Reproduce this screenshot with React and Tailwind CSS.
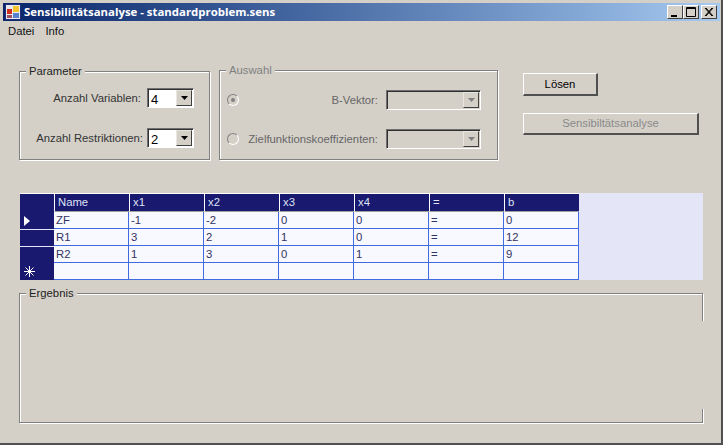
const FONT = "font-['Liberation_Sans',Arial,sans-serif]";

const COLUMNS = ["Name", "x1", "x2", "x3", "x4", "=", "b"];
const ROWS = [
  { marker: "arrow", cells: ["ZF", "-1", "-2", "0", "0", "=", "0"] },
  { marker: "", cells: ["R1", "3", "2", "1", "0", "=", "12"] },
  { marker: "", cells: ["R2", "1", "3", "0", "1", "=", "9"] },
  { marker: "star", cells: ["", "", "", "", "", "", ""] },
];

function AppIcon() {
  return (
    <svg width="16" height="16" viewBox="0 0 16 16">
      <rect x="0.5" y="0.5" width="15" height="15" fill="#e8e8f0" stroke="#1c2f7a" />
      <rect x="8" y="2" width="6" height="6" fill="#f4c430" />
      <rect x="2" y="5" width="5" height="5" fill="#d03020" />
      <rect x="8" y="9" width="6" height="5" fill="#5a80d0" />
      <rect x="2" y="11" width="5" height="3" fill="#a05060" />
    </svg>
  );
}

function CaptionButton({ children }) {
  return (
    <div className="w-[16px] h-[14px] bg-[#d4d0c8] border-t border-l border-white border-r border-b border-r-[#404040] border-b-[#404040] flex items-center justify-center">
      <svg width="12" height="10" viewBox="0 0 12 10">{children}</svg>
    </div>
  );
}

function Arrow({ disabled }) {
  return (
    <svg width="7" height="4" viewBox="0 0 7 4">
      <path d="M0 0h7L3.5 4z" fill={disabled ? "#808080" : "#000"} />
    </svg>
  );
}

function Combo({ value, width, disabled }) {
  return (
    <div className={`flex h-[20px] p-[1px] border-t border-l border-[#707070] border-r border-b border-r-white border-b-white shadow-[inset_1px_1px_0_#303030] ${width} ${disabled ? "bg-[#d4d0c8]" : "bg-white"}`}>
      <div className="flex-1 pl-[2px] text-[13px] leading-[19px] text-black">{value}</div>
      <div className="w-[16px] bg-[#d4d0c8] border-t border-l border-[#e8e6e0] border-r border-b border-r-[#404040] border-b-[#404040] flex items-center justify-center">
        <Arrow disabled={disabled} />
      </div>
    </div>
  );
}

function Radio({ checked }) {
  return (
    <div className="w-[12px] h-[12px] rounded-full border border-[#808080] border-r-white border-b-white bg-[#d4d0c8] flex items-center justify-center shrink-0">
      {checked && <div className="w-[4px] h-[4px] rounded-full bg-[#808080]" />}
    </div>
  );
}

function Group({ title, disabled, className, children }) {
  return (
    <div className={`relative border border-[#808080] shadow-[inset_1px_1px_0_#fff,1px_1px_0_#fff] ${className}`}>
      <div className={`absolute -top-[8px] left-[6px] bg-[#d4d0c8] px-[3px] text-[11.3px] leading-[14px] ${disabled ? "text-[#808080]" : "text-[#222]"}`}>
        {title}
      </div>
      {children}
    </div>
  );
}

function DataGrid() {
  return (
    <div className="ml-[20px] mt-[33px] w-[683px] h-[87px] bg-[#e4e6f8] text-[11.3px] text-[#33335f]">
      <div className="flex w-[559px] h-[19px]">
        <div className="w-[34px] bg-[#191970] border-t border-white" />
        {COLUMNS.map((col) => (
          <div key={col} className="w-[75px] bg-[#191970] text-[#dfe3f5] border-t border-l border-white border-b border-b-[#a0a0a0] pl-[3px] leading-[16px]">
            {col}
          </div>
        ))}
      </div>
      {ROWS.map((row, i) => (
        <div key={i} className="flex w-[559px] h-[17px]">
          <div className={`w-[34px] bg-[#191970] flex items-center pl-[4px] text-white ${i > 0 && i < 3 ? "border-t border-[#e4e6f8]" : ""}`}>
            {row.marker === "arrow" && (
              <svg width="6" height="10" viewBox="0 0 6 10"><path d="M0 0l6 5-6 5z" fill="#fff" /></svg>
            )}
            {row.marker === "star" && (
              <svg width="11" height="11" viewBox="0 0 11 11" stroke="#fff" strokeWidth="1">
                <path d="M5.5 0v11M0 5.5h11M1.5 1.5l8 8M9.5 1.5l-8 8" />
              </svg>
            )}
          </div>
          {row.cells.map((cell, j) => (
            <div key={j} className="w-[75px] bg-[#f8f8ff] border-r border-b border-[#4169e1] pl-[2px] leading-[17px]">
              {cell}
            </div>
          ))}
        </div>
      ))}
    </div>
  );
}

export default function App() {
  return (
    <div className={`w-[723px] h-[445px] bg-[#d4d0c8] overflow-hidden border-r-2 border-b-2 border-[#505050] pt-[3px] pl-[3px] ${FONT}`}>
      {/* title bar */}
      <div className="h-[18px] w-[717px] flex items-center pl-[2px] pr-[3px] bg-gradient-to-r from-[#0a246a] to-[#a6caf0]">
        <AppIcon />
        <div className="ml-[3px] flex-1 font-['Open_Sans',sans-serif] font-bold text-[11.4px] text-white leading-[18px]">
          Sensibilitätsanalyse - standardproblem.sens
        </div>
        <div className="flex">
          <CaptionButton><path d="M2 8h6v2H2z" fill="#000" /></CaptionButton>
          <CaptionButton><path d="M1.5 0.5h9v9h-9zM1.5 1.5h9" fill="none" stroke="#000" /></CaptionButton>
          <div className="w-[2px]" />
          <CaptionButton><path d="M2 1l7 8M3 1l7 8M9 1L2 9M10 1L3 9" stroke="#000" fill="none" /></CaptionButton>
        </div>
      </div>

      {/* menu */}
      <div className="flex gap-[11px] pl-[5px] h-[20px] items-center text-[11.3px] text-[#111]">
        <span>Datei</span>
        <span>Info</span>
      </div>

      {/* top controls */}
      <div className="flex items-start pl-[16px] pt-[30px] text-[11.3px] text-[#333]">
        <Group title="Parameter" className="w-[191px] h-[89px] pt-[16px] pr-[15px] flex flex-col items-end gap-[20px]">
          <div className="flex items-center gap-[6px]">
            <span>Anzahl Variablen:</span>
            <Combo value="4" width="w-[47px]" />
          </div>
          <div className="flex items-center gap-[4px]">
            <span>Anzahl Restriktionen:</span>
            <Combo value="2" width="w-[47px]" />
          </div>
        </Group>

        <Group title="Auswahl" disabled className="ml-[9px] w-[279px] h-[90px] -mt-[1px] pt-[19px] pl-[7px] pr-[16px] flex flex-col gap-[19px] text-[#666]">
          <div className="flex items-center">
            <Radio checked />
            <span className="flex-1 text-right">B-Vektor:</span>
            <div className="w-[8px]" />
            <Combo width="w-[95px]" disabled />
          </div>
          <div className="flex items-center">
            <Radio />
            <span className="flex-1 text-right">Zielfunktionskoeffizienten:</span>
            <div className="w-[8px]" />
            <Combo width="w-[95px]" disabled />
          </div>
        </Group>

        <div className="ml-[25px] mt-[2px] flex flex-col gap-[17px] items-start">
          <button className="w-[75px] h-[23px] bg-[#d4d0c8] border-t border-l border-white border-r-2 border-b-2 border-r-[#505050] border-b-[#505050] text-[11.3px] text-black">
            Lösen
          </button>
          <button className="w-[176px] h-[22px] bg-[#d4d0c8] border-t border-l border-white border-r-2 border-b-2 border-r-[#505050] border-b-[#505050] text-[11.3px] text-[#8a8a8a]">
            Sensibiltätsanalyse
          </button>
        </div>
      </div>

      <div className="-ml-[3px]">
        <DataGrid />
      </div>

      {/* result */}
      <Group title="Ergebnis" className="ml-[16px] mt-[13px] w-[684px] h-[130px] text-[11.3px]">
        <div className="absolute -right-[2px] top-[27px] h-[88px] w-[4px] bg-[#d4d0c8]" />
      </Group>
    </div>
  );
}
